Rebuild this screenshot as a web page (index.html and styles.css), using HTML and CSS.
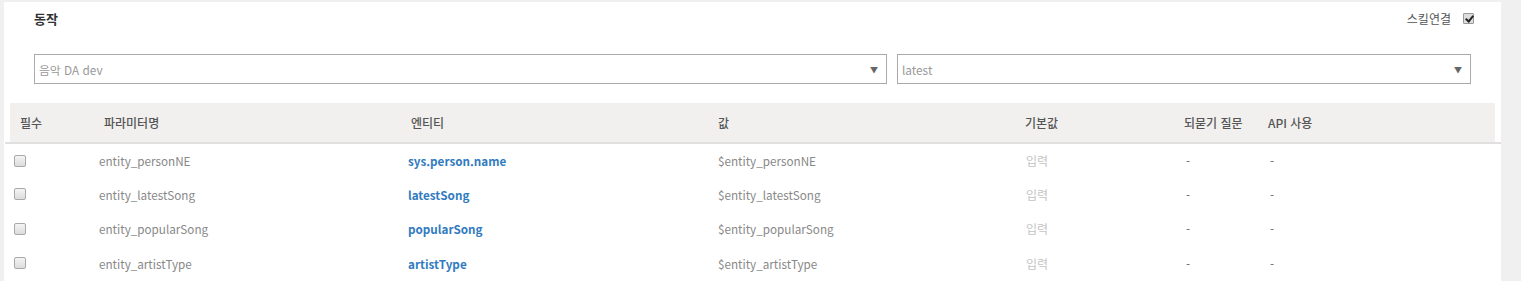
FILE: index.html
```html
<!DOCTYPE html>
<html lang="ko">
<head>
<meta charset="UTF-8" />
<title>동작</title>
<link rel="stylesheet" href="styles.css">
</head>
<body>
  <div class="panel">
    <div class="panel-head">
      <h3 class="title">동작</h3>
      <label class="skill-link">스킬연결 <span class="check checked"></span></label>
    </div>

    <div class="selects">
      <div class="select select-wide">음악 DA dev <span class="arrow">&#9660;</span></div>
      <div class="select select-narrow">latest <span class="arrow">&#9660;</span></div>
    </div>

    <div class="params">
      <div class="params-head">
        <div>필수</div>
        <div>파라미터명</div>
        <div>엔티티</div>
        <div>값</div>
        <div>기본값</div>
        <div>되묻기 질문</div>
        <div>API 사용</div>
      </div>
      <div class="params-body">
        <div class="row">
          <div><span class="check"></span></div>
          <div class="name">entity_personNE</div>
          <div class="entity">sys.person.name</div>
          <div class="value">$entity_personNE</div>
          <div class="default">입력</div>
          <div class="dash">-</div>
          <div class="dash">-</div>
        </div>
        <div class="row">
          <div><span class="check"></span></div>
          <div class="name">entity_latestSong</div>
          <div class="entity">latestSong</div>
          <div class="value">$entity_latestSong</div>
          <div class="default">입력</div>
          <div class="dash">-</div>
          <div class="dash">-</div>
        </div>
        <div class="row">
          <div><span class="check"></span></div>
          <div class="name">entity_popularSong</div>
          <div class="entity">popularSong</div>
          <div class="value">$entity_popularSong</div>
          <div class="default">입력</div>
          <div class="dash">-</div>
          <div class="dash">-</div>
        </div>
        <div class="row">
          <div><span class="check"></span></div>
          <div class="name">entity_artistType</div>
          <div class="entity">artistType</div>
          <div class="value">$entity_artistType</div>
          <div class="default">입력</div>
          <div class="dash">-</div>
          <div class="dash">-</div>
        </div>
      </div>
    </div>
  </div>
</body>
</html>
```

FILE: styles.css
```css
body {
  margin: 0;
  background: #f1f0f0;
  font-family: "Noto Sans CJK KR", "Noto Sans", sans-serif;
  font-size: 13px;
  color: #555;
}
.panel {
  background: #fff;
  margin: 2px 0 0 4px;
  width: 1497px;
  height: 279px;
}
.panel-head {
  display: flex;
  justify-content: space-between;
  align-items: center;
  height: 32px;
  padding: 0 27px 0 30px;
}
.title {
  margin: 0;
  font-size: 13px;
  font-weight: bold;
  color: #333;
}
.skill-link {
  display: flex;
  align-items: center;
  gap: 12px;
  font-size: 12px;
  color: #555;
}
.check {
  display: inline-block;
  box-sizing: border-box;
  width: 12px;
  height: 12px;
  border: 1px solid #a9a9a9;
  border-radius: 2px;
  background: linear-gradient(#f4f4f4, #dcdcdc);
  position: relative;
}
.check.checked {
  width: 11px;
  height: 11px;
  border-radius: 1px;
  background: #ddd;
  border-color: #999;
}
.check.checked::after {
  content: "";
  position: absolute;
  left: 3px;
  top: 0px;
  width: 3px;
  height: 6px;
  border: solid #222;
  border-width: 0 2px 2px 0;
  transform: rotate(40deg);
}
.selects {
  display: flex;
  gap: 10px;
  padding: 20px 0 0 30px;
}
.select {
  box-sizing: border-box;
  height: 30px;
  border: 1px solid #aaa;
  display: flex;
  align-items: center;
  justify-content: space-between;
  padding: 0 8px 0 4px;
  color: #999;
  font-size: 11.8px;
}
.select-wide { width: 853px; }
.select-narrow { width: 574px; }
.arrow {
  font-size: 8px;
  color: #666;
}
.params {
  margin-top: 19px;
}
.params-head {
  display: grid;
  grid-template-columns: 84px 307px 307px 307px 159px 84px 1fr;
  align-items: center;
  height: 39px;
  margin: 0 6px 0 6px;
  padding-left: 10px;
  background: #f1f0ef;
  font-size: 12px;
  font-weight: 500;
  color: #555;
}
.params-body {
  border-top: 2px solid #e0e0e0;
  margin-left: 1px;
}
.row {
  display: grid;
  grid-template-columns: 85px 309px 310px 308px 160px 84px 1fr;
  align-items: center;
  height: 34.5px;
  padding-left: 9px;
  font-size: 11.7px;
}
.row:first-child {
  height: 33px;
}
.row .check {
  display: block;
}
.name, .value {
  color: #888;
}
.entity {
  color: #317bc0;
  font-weight: bold;
}
.default {
  color: #c4c4c4;
  font-size: 12px;
}
.dash {
  color: #666;
}
```
